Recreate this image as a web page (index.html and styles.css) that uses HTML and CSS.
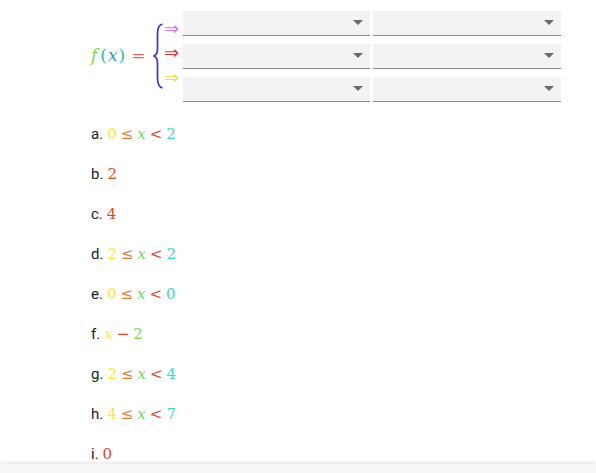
FILE: index.html
```html
<!DOCTYPE html>
<html>
<head>
<meta charset="utf-8">
<link rel="stylesheet" href="styles.css">
</head>
<body>
<div class="top">
  <div class="fx"><span class="g i">f</span><span class="t">(<span class="i xx">x</span>)</span><span class="eq">=</span></div>
  <svg class="brace" width="10" height="66" viewBox="0 0 10 66">
    <path d="M9.5 1 C5.5 2 4.5 5 4.5 11 L4.5 26 C4.5 30 3.5 32 0.8 33 C3.5 34 4.5 36 4.5 40 L4.5 55 C4.5 61 5.5 64 9.5 65" fill="none" stroke="#4b2dc2" stroke-width="1.7"/>
  </svg>
  <div class="arrows"><span class="a1">⇒</span><span class="a2">⇒</span><span class="a3">⇒</span></div>
  <div class="grid">
    <div class="dd"><i class="tri"></i></div>
    <div class="dd"><i class="tri"></i></div>
    <div class="dd"><i class="tri"></i></div>
    <div class="dd"><i class="tri"></i></div>
    <div class="dd"><i class="tri"></i></div>
    <div class="dd"><i class="tri"></i></div>
  </div>
</div>
<ul class="list">
  <li><span class="lab">a.</span><span class="m"><span class="y">0</span><span class="rel o">≤</span><span class="g i">x</span><span class="rel r">&lt;</span><span class="c">2</span></span></li>
  <li><span class="lab">b.</span><span class="m"><span class="rd">2</span></span></li>
  <li><span class="lab">c.</span><span class="m"><span class="rd">4</span></span></li>
  <li><span class="lab">d.</span><span class="m"><span class="y">2</span><span class="rel o">≤</span><span class="g i">x</span><span class="rel r">&lt;</span><span class="c">2</span></span></li>
  <li><span class="lab">e.</span><span class="m"><span class="y">0</span><span class="rel o">≤</span><span class="g i">x</span><span class="rel r">&lt;</span><span class="c">0</span></span></li>
  <li><span class="lab">f.</span><span class="m"><span class="y i">x</span><span class="bin r">−</span><span class="g">2</span></span></li>
  <li><span class="lab">g.</span><span class="m"><span class="y">2</span><span class="rel o">≤</span><span class="g i">x</span><span class="rel r">&lt;</span><span class="c">4</span></span></li>
  <li><span class="lab">h.</span><span class="m"><span class="y">4</span><span class="rel o">≤</span><span class="g i">x</span><span class="rel r">&lt;</span><span class="c">7</span></span></li>
  <li><span class="lab">i.</span><span class="m"><span class="rd">0</span></span></li>
</ul>
<div class="bottombar"></div>
</body>
</html>
```
FILE: styles.css
```css
html, body {
  margin: 0;
  padding: 0;
  background: #fff;
  font-family: Roboto, "Liberation Sans", sans-serif;
  overflow: hidden;
}
.top {
  display: flex;
  align-items: center;
  padding: 11px 0 0 91px;
  height: 92px;
}
.fx {
  font-family: "DejaVu Serif", "Liberation Serif", serif;
  font-size: 17px;
  display: flex;
  align-items: baseline;
  margin-top: -4px;
  width: 56px;
  white-space: nowrap;
}
.fx .t { color: #2ab7a9; margin-left: 3px; }
.fx .t .xx { color: #2a9fb0; padding: 0 1px; }
.fx .eq { color: #e06a6a; margin-left: 6px; }
.brace { margin-left: 6px; margin-top: -3px; }
.arrows {
  display: flex;
  flex-direction: column;
  font-family: "DejaVu Sans", sans-serif;
  font-size: 18px;
  line-height: 24.5px;
  margin-left: 1px;
  margin-top: -7px;
  width: 19px;
}
.a1 { color: #d77ad8; }
.a2 { color: #d83a3a; }
.a3 { color: #eedc4a; }
.grid {
  display: grid;
  grid-template-columns: 187px 188px;
  grid-auto-rows: 25px;
  column-gap: 3px;
  row-gap: 8px;
  align-self: flex-start;
}
.dd {
  background: #f3f3f3;
  border-bottom: 1px solid #8a8a8a;
  display: flex;
  align-items: center;
  justify-content: flex-end;
  padding-right: 7px;
}
.tri {
  width: 0;
  height: 0;
  border-left: 5px solid transparent;
  border-right: 5px solid transparent;
  border-top: 5px solid #6a6a6a;
  margin-top: -2px;
}
.list {
  list-style: none;
  margin: 0;
  padding: 21px 0 0 91px;
}
.list li {
  height: 20px;
  line-height: 20px;
  margin-bottom: 20px;
  font-size: 15px;
  color: #222;
  display: flex;
  align-items: baseline;
}
.lab { margin-right: 4px; }
.m {
  font-family: "DejaVu Serif", "Liberation Serif", serif;
  font-size: 15px;
  white-space: nowrap;
}
.rel { margin: 0 4px; }
.bin { margin: 0 4px; }
.i { font-style: italic; }
.y { color: #f3e84a; }
.o { color: #e07a3a; }
.g { color: #78d45a; }
.r { color: #e0452a; }
.c { color: #3ed8b8; }
.rd { color: #d9482a; }
.bottombar {
  position: fixed;
  left: 0;
  right: 0;
  bottom: 0;
  height: 9px;
  background: #f8f8f8;
  box-shadow: 0 -1px 4px rgba(0,0,0,0.12);
}
```
